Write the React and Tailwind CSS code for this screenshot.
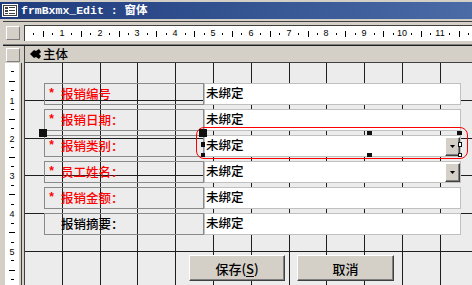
import React from 'react';

const CM = 37.8;

const fields = [
  { label: '报销编号', required: true },
  { label: '报销日期：', required: true },
  { label: '报销类别：', required: true, combo: true },
  { label: '员工姓名：', required: true, combo: true },
  { label: '报销金额：', required: true },
  { label: '报销摘要：', required: false },
];

const cjk = "font-['Noto_Sans_CJK_SC',sans-serif]";

function TitleIcon() {
  return (
    <svg width="16" height="13" viewBox="0 0 16 13" className="shrink-0">
      <rect x="0.5" y="0.5" width="15" height="12" fill="#d4d0c8" stroke="#ffffff" />
      <rect x="1.5" y="1.5" width="13" height="10" fill="#ffffff" stroke="#404040" />
      <rect x="3" y="3" width="3" height="2" fill="#404040" />
      <rect x="7" y="3" width="6" height="1" fill="#404040" />
      <rect x="3" y="6" width="3" height="2" fill="#404040" />
      <rect x="7" y="6" width="6" height="1" fill="#404040" />
      <rect x="3" y="9" width="3" height="1" fill="#404040" />
      <rect x="7" y="9" width="6" height="1" fill="#404040" />
    </svg>
  );
}

function HRuler() {
  const marks = [];
  for (let q = 1; q <= 48; q++) {
    if (q % 4 === 0) continue;
    const x = Math.round((CM * q) / 4) - 1;
    const half = q % 2 === 0;
    marks.push(<rect key={q} x={x} y={half ? 5 : 7} width="1" height={half ? 6 : 2} fill="#000" />);
  }
  return (
    <div className="relative flex-1 h-full bg-white border-l border-t border-[#404040] overflow-hidden">
      <svg className="absolute left-0 top-0" width="460" height="15">{marks}</svg>
      {Array.from({ length: 11 }, (_, i) => i + 1).map((n) => (
        <span
          key={n}
          className="absolute top-0 h-[15px] w-[20px] flex items-center justify-center text-[9px] leading-none text-black font-['Liberation_Sans',sans-serif]"
          style={{ left: Math.round(CM * n) - 11 }}
        >
          {n}
        </span>
      ))}
    </div>
  );
}

function VRuler() {
  const marks = [];
  for (let q = 1; q <= 24; q++) {
    if (q % 4 === 0) continue;
    const y = Math.round((CM * q) / 4) - 1;
    const half = q % 2 === 0;
    marks.push(<rect key={q} x={half ? 4 : 6} y={y} width={half ? 6 : 3} height="1" fill="#000" />);
  }
  return (
    <div className="relative ml-[5px] w-[14px] h-full bg-white overflow-hidden">
      <svg className="absolute left-0 top-0" width="14" height="230">{marks}</svg>
      {[1, 2, 3, 4, 5].map((n) => (
        <span
          key={n}
          className="absolute left-0 w-[14px] h-[10px] flex items-center justify-center text-[9px] leading-none text-black font-['Liberation_Sans',sans-serif]"
          style={{ top: Math.round(CM * n) - 5 }}
        >
          {n}
        </span>
      ))}
    </div>
  );
}

function Grid() {
  const xs = Array.from({ length: 12 }, (_, i) => Math.round(CM * (i + 1)) - 1);
  const ys = Array.from({ length: 6 }, (_, i) => Math.round(CM * (i + 1)));
  return (
    <svg className="absolute left-0 top-0" width="450" height="230">
      {xs.map((x) => (
        <line key={'x' + x} x1={x + 0.5} y1="0" x2={x + 0.5} y2="230" stroke="#1e1e1e" strokeWidth="1" />
      ))}
      {ys.map((y) => (
        <line key={'y' + y} x1="0" y1={y - 0.5} x2="450" y2={y - 0.5} stroke="#1e1e1e" strokeWidth="1" />
      ))}
    </svg>
  );
}

function ComboButton() {
  return (
    <div className="w-[15px] h-[19px] mt-[1px] shrink-0 bg-[#d4d0c8] border border-t-white border-l-white border-r-[#404040] border-b-[#404040] shadow-[inset_-1px_-1px_0_#808080] flex items-center justify-center">
      <svg width="5" height="3" viewBox="0 0 5 3">
        <path d="M0 0H5L2.5 3Z" fill="#000" />
      </svg>
    </div>
  );
}

function FieldRow({ field }) {
  return (
    <div className="flex h-[22px]">
      <div
        className={`w-[160px] h-full border border-[#8a8a8a] flex items-center pl-[3px] text-[12.5px] leading-none font-medium ${cjk} ${
          field.required ? 'text-[#ff0000]' : 'text-black'
        }`}
      >
        <span className="w-[13px] font-bold font-['Liberation_Mono',monospace] text-[12px]">{field.required ? '*' : ''}</span>
        <span>{field.label}</span>
      </div>
      <div className="w-[257px] h-full bg-white border border-[#c0c0c0] flex items-start justify-between">
        <span className={`pl-[1px] pt-[3px] text-[12.5px] leading-none font-medium text-black ${cjk}`}>未绑定</span>
        {field.combo && <ComboButton />}
      </div>
    </div>
  );
}

function Handle({ className }) {
  return <div className={`absolute ${className}`} />;
}

function Button({ children, className }) {
  return (
    <button
      type="button"
      className={`h-[26px] bg-[#d4d0c8] border border-t-white border-l-white border-r-[#404040] border-b-[#404040] shadow-[inset_-1px_-1px_0_#808080] flex items-center justify-center text-[13px] leading-none font-medium text-black ${cjk} ${className}`}
    >
      {children}
    </button>
  );
}

export default function App() {
  return (
    <div className={`w-[472px] h-[285px] overflow-hidden bg-[#d4d0c8] flex flex-col pt-[2px] ${cjk}`}>
      {/* title bar */}
      <div className="h-[17px] shrink-0 flex items-center gap-[3px] pl-[2px] bg-gradient-to-r from-[#1f3b7c] to-[#4a6ba6]">
        <TitleIcon />
        <span className="text-white font-bold text-[11.5px] leading-none whitespace-pre font-['Liberation_Mono','Noto_Sans_CJK_SC',monospace]">
          frmBxmx_Edit : 窗体
        </span>
      </div>
      <div className="h-[6px] shrink-0 pt-[2px] pl-[3px]">
        <div className="h-px bg-[#404040]" />
      </div>

      {/* ruler row */}
      <div className="h-[16px] shrink-0 flex">
        <div className="w-[24px] shrink-0 pl-[6px] pt-[1px]">
          <div className="w-[14px] h-[14px] border border-t-white border-l-white border-r-[#808080] border-b-[#808080] bg-[#d4d0c8]" />
        </div>
        <HRuler />
      </div>
      <div className="h-[5px] shrink-0 flex flex-col justify-end pl-[3px]">
        <div className="h-px bg-[#808080]" />
        <div className="h-px bg-[#202020]" />
      </div>

      {/* section header */}
      <div className="h-[17px] shrink-0 flex">
        <div className="w-[24px] shrink-0 pl-[6px] pt-[2px]">
          <div className="w-[14px] h-[14px] border border-t-white border-l-white border-r-[#808080] border-b-[#808080] bg-[#d4d0c8]" />
        </div>
        <div className="flex-1 flex items-center gap-[2px] pl-[5px] border-l border-b border-[#404040] bg-[#d4d0c8]">
          <svg width="11" height="10" viewBox="0 0 11 10">
            <path d="M0 5 L4 1 L6 2 L9 0 L11 3 L9 5 L11 7 L9 10 L6 8 L4 9 Z" fill="#000" />
          </svg>
          <span className="text-[12.5px] leading-none font-medium text-black">主体</span>
        </div>
      </div>

      {/* body */}
      <div className="flex-1 flex min-h-0">
        <div className="w-[24px] shrink-0 flex">
          <VRuler />
          <div className="w-[2px]" />
          <div className="w-px bg-[#404040]" />
        </div>
        <div className="relative flex-1 border-l border-[#404040] bg-[#ececec] overflow-hidden">
          <Grid />
          <div className="relative flex flex-col gap-[4px] pl-[19px] pt-[20px]">
            {fields.map((f) => (
              <FieldRow key={f.label} field={f} />
            ))}
            <div className="flex gap-[12px] pl-[145px] mt-[16px]">
              <Button className="w-[96px]">
                保存(<span className="underline underline-offset-2">S</span>)
              </Button>
              <Button className="w-[97px]">取消</Button>
            </div>
          </div>

          {/* selection of 报销类别 */}
          <div className="absolute left-[171px] top-[64px] w-[272px] h-[32px] rounded-[8px] border border-[#ff0000]" />
          <Handle className="left-[14px] top-[66px] w-[8px] h-[8px] bg-[#101010]" />
          <Handle className="left-[174px] top-[66px] w-[8px] h-[8px] bg-[#101010]" />
          <Handle className="left-[176px] top-[79px] w-[4px] h-[5px] bg-[#101010]" />
          <Handle className="left-[176px] top-[90px] w-[4px] h-[4px] bg-[#101010]" />
          <Handle className="left-[342px] top-[68px] w-[5px] h-[4px] bg-[#101010]" />
          <Handle className="left-[342px] top-[90px] w-[5px] h-[4px] bg-[#101010]" />
          <Handle className="left-[432px] top-[68px] w-[5px] h-[4px] bg-[#101010]" />
          <Handle className="left-[433px] top-[79px] w-[4px] h-[5px] border border-[#101010] bg-white" />
          <Handle className="left-[433px] top-[90px] w-[4px] h-[4px] border border-[#101010] bg-white" />
        </div>
      </div>
    </div>
  );
}
